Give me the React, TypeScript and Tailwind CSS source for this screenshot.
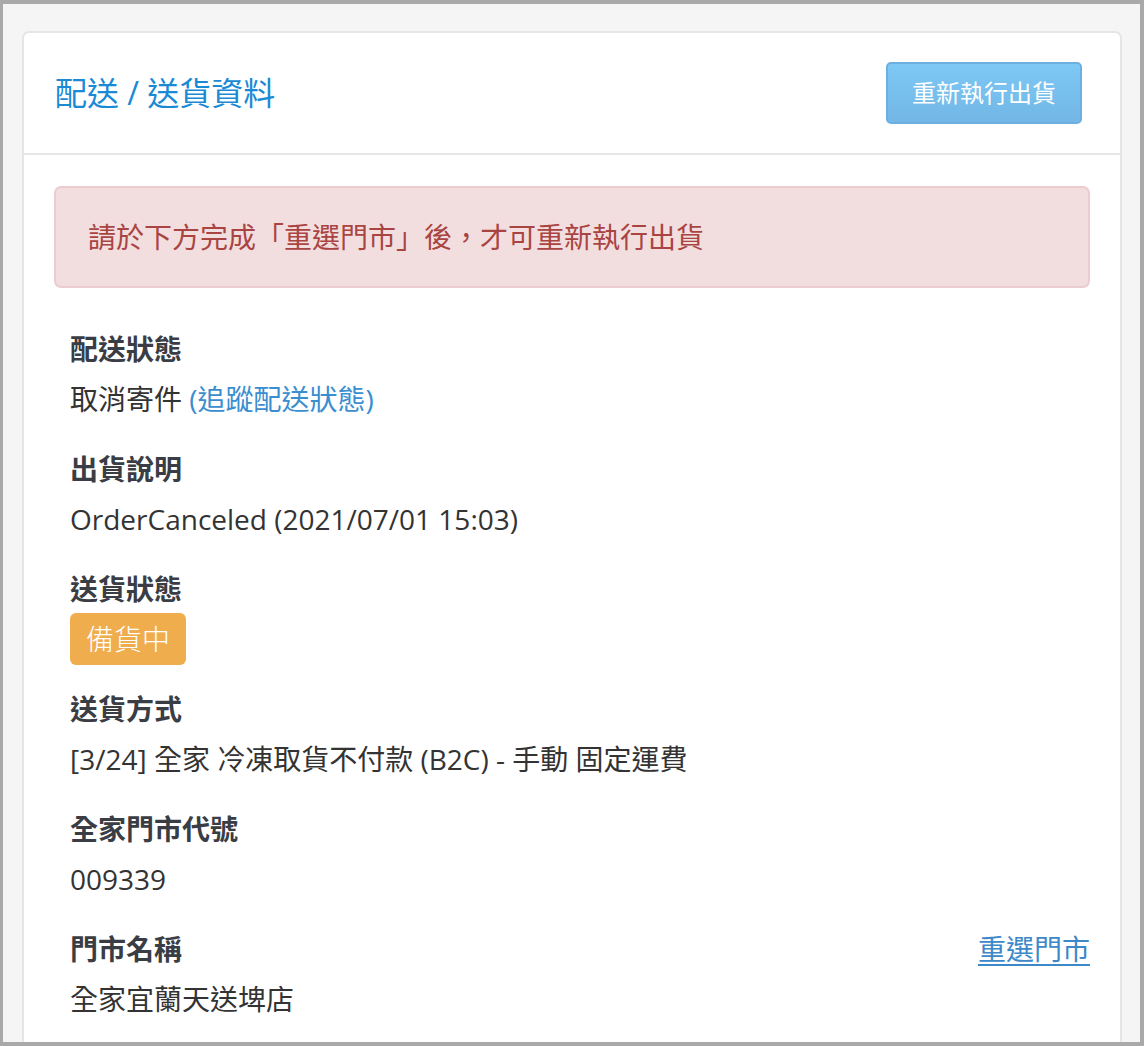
import React from "react";

const font = {
    fontFamily: '"Open Sans", "Noto Sans CJK TC", sans-serif',
};

type Field = {
    label: string;
    value: React.ReactNode;
    action?: string;
};

const fields: Field[] = [
    {
        label: "配送狀態",
        value: (
            <>
                取消寄件 <a className="text-[#3a8ecf]">(追蹤配送狀態)</a>
            </>
        ),
    },
    { label: "出貨說明", value: "OrderCanceled (2021/07/01 15:03)" },
    {
        label: "送貨狀態",
        value: (
            <span className="inline-flex h-[52px] items-center rounded-[6px] bg-[#f0ad4e] px-[16px] font-light text-white">
                備貨中
            </span>
        ),
    },
    { label: "送貨方式", value: "[3/24] 全家 冷凍取貨不付款 (B2C) - 手動 固定運費" },
    { label: "全家門市代號", value: "009339" },
    { label: "門市名稱", value: "全家宜蘭天送埤店", action: "重選門市" },
];

export default function App() {
    return (
        <div
            className="h-[1046px] w-[1144px] overflow-hidden border-t-4 border-b-4 border-l-[3px] border-r-4 border-[#a9a9a9] bg-[#f5f5f5] pt-[27px] pl-[19px] pr-[18px]"
            style={font}
        >
            <div className="rounded-[7px] border-2 border-[#e6e6e6] bg-white">
                {/* Header */}
                <div className="flex items-center justify-between border-b-2 border-[#e6e6e6] pt-[29px] pb-[29px] pl-[31px] pr-[38px]">
                    <h1 className="text-[32px] leading-[40px] text-[#1a8ad5]">配送 / 送貨資料</h1>
                    <button className="h-[62px] w-[196px] rounded-[5px] border-2 border-[#6fafe0] bg-gradient-to-b from-[#7dc8f5] to-[#72b7e6] text-[24px] text-white">
                        重新執行出貨
                    </button>
                </div>

                {/* Body */}
                <div className="px-[30px] pt-[31px] pb-[40px]">
                    <div className="rounded-[7px] border-2 border-[#ebccd1] bg-[#f2dede] px-[32px] py-[29px] text-[28px] leading-[40px] text-[#a94442]">
                        請於下方完成「重選門市」後，才可重新執行出貨
                    </div>

                    <div className="mt-[41px] pl-[16px] text-[28px] text-[#333]">
                        {fields.map((f) =>
                            f.label === "送貨狀態" ? (
                                <div key={f.label} className="mb-[24px]">
                                    <div className="font-bold leading-[40px] text-[#3a3d44]">{f.label}</div>
                                    <div className="mt-[4px] leading-[52px]">{f.value}</div>
                                </div>
                            ) : (
                                <div key={f.label} className="mb-[30px]">
                                    <div className="flex items-center justify-between leading-[40px]">
                                        <span className="font-bold text-[#3a3d44]">{f.label}</span>
                                        {f.action && (
                                            <a className="text-[#3c88c9] underline underline-offset-4">{f.action}</a>
                                        )}
                                    </div>
                                    <div className="mt-[10px] leading-[40px]">{f.value}</div>
                                </div>
                            )
                        )}
                    </div>
                </div>
            </div>
        </div>
    );
}
